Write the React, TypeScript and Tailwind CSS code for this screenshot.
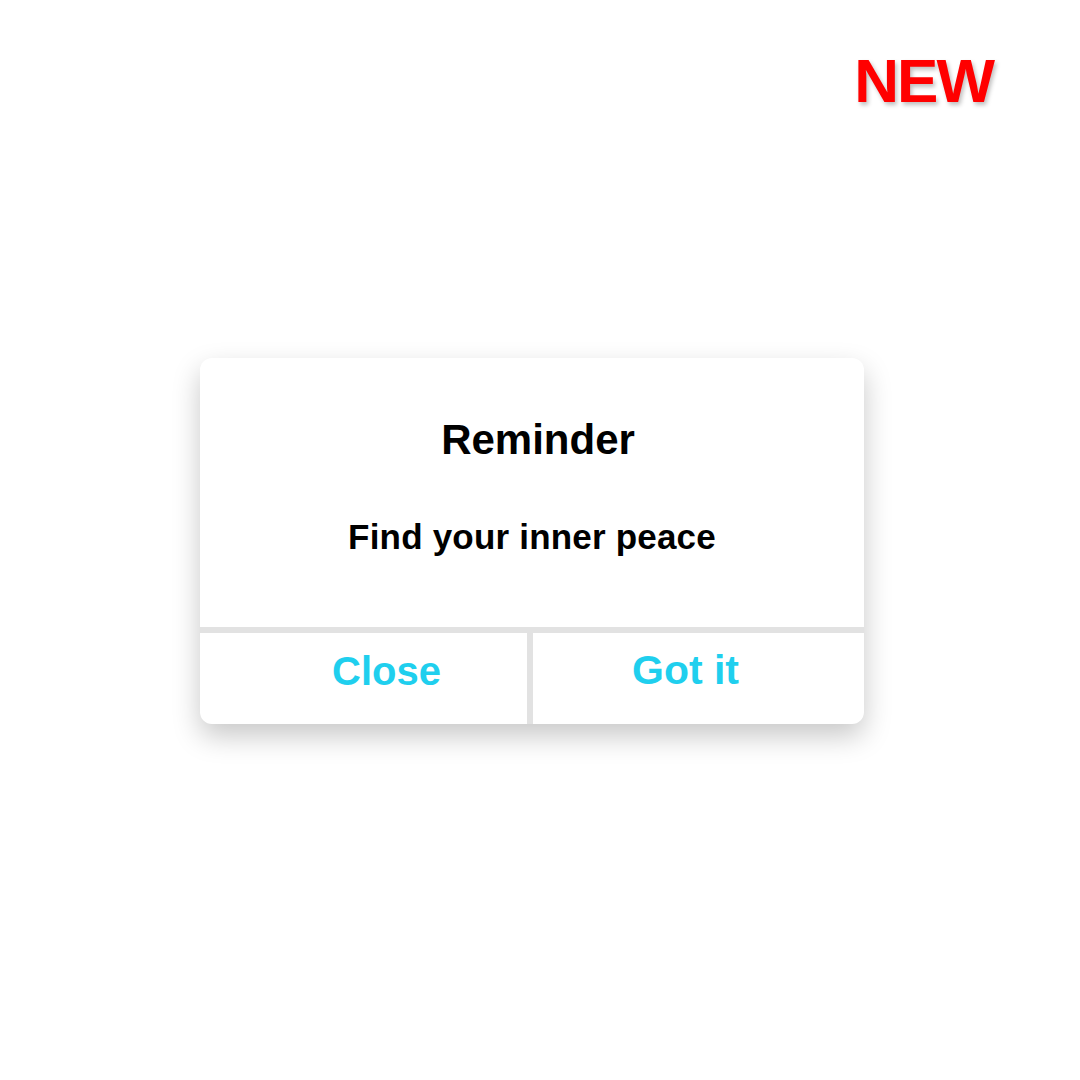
import React from 'react';

const App: React.FC = () => {
  return (
    <div className="w-[1080px] h-[1080px] bg-white font-['Liberation_Sans',Arial,sans-serif] flex flex-col">
      {/* Badge */}
      <div className="flex justify-end pr-[87px] pt-[50px]">
        <span className="text-[62px] leading-none font-bold text-[#ff0000] tracking-[-2px] [text-shadow:2px_3px_4px_rgba(0,0,0,0.25)]">
          NEW
        </span>
      </div>

      {/* Dialog */}
      <div className="ml-[200px] mt-[246px] w-[664px] rounded-[12px] bg-white shadow-[0_12px_28px_rgba(0,0,0,0.22)] overflow-hidden flex flex-col">
        <div className="h-[269px] pt-[61px] flex flex-col items-center">
          <h2 className="pl-[12px] text-[42px] leading-none font-bold text-black">Reminder</h2>
          <p className="mt-[58px] text-[35px] leading-none font-bold text-black tracking-[0.2px]">Find your inner peace</p>
        </div>
        <div className="h-[6px] bg-[#e2e2e2]" />
        <div className="h-[91px] flex">
          <button className="w-[327px] h-full pt-[18px] pl-[132px] flex items-start text-[40px] leading-none font-bold text-[#1fcfee]">
            Close
          </button>
          <div className="w-[6px] h-full bg-[#e2e2e2]" />
          <button className="flex-1 h-full pt-[17px] pl-[99px] flex items-start text-[41px] leading-none font-bold text-[#1fcfee]">
            Got it
          </button>
        </div>
      </div>
    </div>
  );
};

export default App;
